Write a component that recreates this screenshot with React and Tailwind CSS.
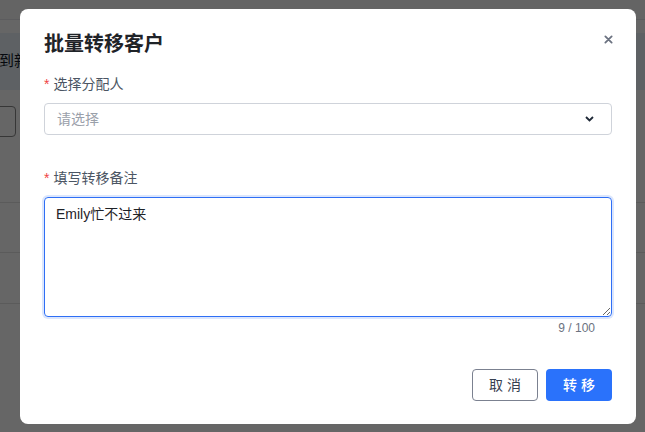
import React from "react";

const font = { fontFamily: '"Liberation Sans", "Noto Sans CJK SC", sans-serif' };

export default function App() {
  return (
    <div className="relative h-[432px] w-[645px] overflow-hidden bg-white" style={font}>
      {/* underlying page */}
      <div className="flex flex-col">
        <div className="h-[20px] border-b border-[#e5e7eb] bg-[#f9fafb]" />
        <div className="h-[13px]" />
        <div className="flex h-[57px] items-center bg-[#eaf3fb] text-[15px] text-[#111827]">
          <span className="-ml-[1px]">到新</span>
        </div>
        <div className="h-[16px]" />
        <div className="flex">
          <div className="-ml-[20px] h-[31px] w-[36px] rounded-[4px] border border-[#8a8a8a]" />
        </div>
        <div className="h-[66px] border-b border-[#e3e3e3]" />
        <div className="h-[50px] border-b border-[#e3e3e3]" />
        <div className="h-[51px] border-b border-[#e3e3e3]" />
      </div>

      {/* overlay + modal */}
      <div className="absolute inset-0 bg-black/60 pl-[20px] pt-[9px]">
        <div className="flex h-[415px] w-[616px] flex-col rounded-[8px] bg-white px-6 pt-[21px]">
          <div className="flex items-center justify-between">
            <h1 className="text-[20px] font-bold leading-[28px] text-[#1f2328]">批量转移客户</h1>
            <svg width="9" height="9" viewBox="0 0 10 10" className="mr-[-1px] mt-[-9px]">
              <path d="M1.5 1.5 L8.5 8.5 M8.5 1.5 L1.5 8.5" stroke="#6b7280" strokeWidth="2" strokeLinecap="round" />
            </svg>
          </div>

          <div className="mt-[16px] flex items-center text-[14px] leading-[20px] text-[#4b5563]">
            <span className="mr-[4px] text-[#ef4444]">*</span>
            <span>选择分配人</span>
          </div>
          <div className="mt-[9px] flex h-[32px] items-center justify-between rounded-[4px] border border-[#cfd3da] px-3 text-[14px] text-[#9aa0aa]">
            <span>请选择</span>
            <svg width="9" height="6" viewBox="0 0 9 6" className="mr-[5px]">
              <path d="M1 1 L4.5 4.5 L8 1" stroke="#1f2937" strokeWidth="1.8" fill="none" />
            </svg>
          </div>

          <div className="mt-[33px] flex items-center text-[14px] leading-[20px] text-[#4b5563]">
            <span className="mr-[4px] text-[#ef4444]">*</span>
            <span>填写转移备注</span>
          </div>
          <textarea
            readOnly
            defaultValue="Emily忙不过来"
            className="mt-[9px] h-[120px] w-full rounded-[4px] border border-[#2e6ff5] px-[11px] py-[6px] text-[14px] leading-[20px] text-[#1f2328] shadow-[0_0_0_2px_#dbe6fd] outline-none"
            style={font}
          />
          <div className="mt-[3px] pr-[17px] text-right text-[12px] leading-[16px] text-[#6b7280]">9 / 100</div>

          <div className="mt-[33px] flex justify-end gap-[8px]">
            <button className="h-[32px] w-[66px] rounded-[4px] border border-[#7b8190] pl-[4px] text-[14px] tracking-[4px] text-[#374151]">
              取消
            </button>
            <button className="h-[32px] w-[66px] rounded-[4px] bg-[#2a72fb] pl-[4px] text-[14px] font-medium tracking-[4px] text-white">
              转移
            </button>
          </div>
        </div>
      </div>
    </div>
  );
}
